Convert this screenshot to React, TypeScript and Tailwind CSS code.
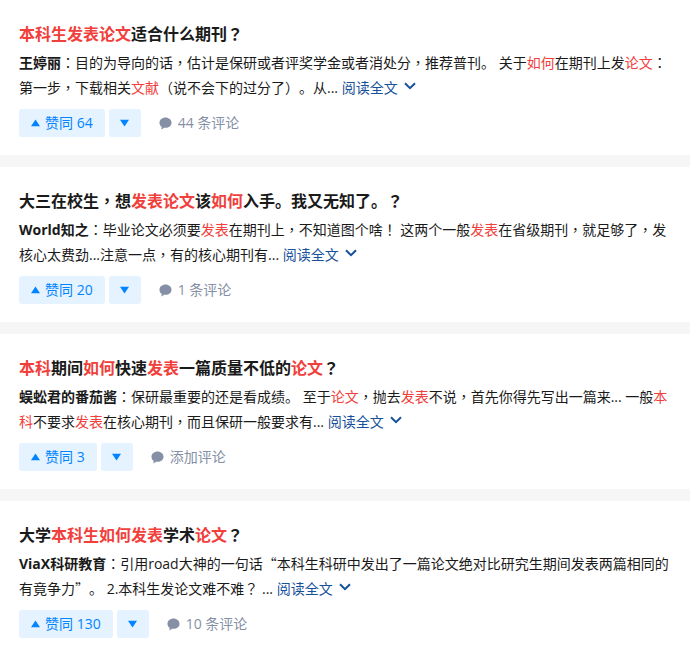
import React from 'react';

const fontStack = 'font-["Open_Sans","Noto_Sans_CJK_SC",sans-serif]';

// centred full-width punctuation and wide quotes, as the reference draws them
const Punct: React.FC<{ text: string }> = ({ text }) => (
  <>
    {text.split(/([，：？！（）“”])/).map((part, i) =>
      i % 2 === 0 ? (
        <React.Fragment key={i}>{part}</React.Fragment>
      ) : part === '“' || part === '”' ? (
        <span key={i} className='font-["Noto_Sans_CJK_SC",sans-serif]'>
          {part}
        </span>
      ) : (
        <span key={i} className='font-["Noto_Sans_CJK_TC",sans-serif]'>
          {part}
        </span>
      ),
    )}
  </>
);

// ~text~ marks a highlighted word
const Marked: React.FC<{ text: string }> = ({ text }) => (
  <>
    {text.split('~').map((part, i) =>
      i % 2 === 1 ? (
        <span key={i} className="text-[#f1403c]">
          {part}
        </span>
      ) : (
        <Punct key={i} text={part} />
      ),
    )}
  </>
);

const items = [
  {
    title: '~本科生发表论文~适合什么期刊？',
    author: '王婷丽',
    excerpt:
      '目的为导向的话，估计是保研或者评奖学金或者消处分，推荐普刊。 关于~如何~在期刊上发~论文~：第一步，下载相关~文献~（说不会下的过分了）。从...',
    votes: 64,
    comments: '44 条评论',
  },
  {
    title: '大三在校生，想~发表论文~该~如何~入手。我又无知了。？',
    author: 'World知之',
    excerpt:
      '毕业论文必须要~发表~在期刊上，不知道图个啥！ 这两个一般~发表~在省级期刊，就足够了，发核心太费劲...注意一点，有的核心期刊有...',
    votes: 20,
    comments: '1 条评论',
  },
  {
    title: '~本科~期间~如何~快速~发表~一篇质量不低的~论文~？',
    author: '蜈蚣君的番茄酱',
    excerpt:
      '保研最重要的还是看成绩。 至于~论文~，抛去~发表~不说，首先你得先写出一篇来... 一般~本科~不要求~发表~在核心期刊，而且保研一般要求有...',
    votes: 3,
    comments: '添加评论',
  },
  {
    title: '大学~本科生如何发表~学术~论文~？',
    author: 'ViaX科研教育',
    excerpt:
      '引用road大神的一句话“本科生科研中发出了一篇论文绝对比研究生期间发表两篇相同的有竟争力”。 2.本科生发论文难不难？ ...',
    votes: 130,
    comments: '10 条评论',
  },
];

const Triangle: React.FC<{ down?: boolean }> = ({ down }) => (
  <svg viewBox="0 0 10 8" className="w-[9px] h-[8px] fill-current">
    <path d={down ? 'M0 0.5h10L5 8z' : 'M5 0l5 7.5H0z'} />
  </svg>
);

const App: React.FC = () => {
  return (
    <div className={`w-[690px] h-[654px] overflow-hidden bg-[#f6f6f6] [text-spacing-trim:space-all] ${fontStack}`}>
      {items.map((item) => (
        <div key={item.author} className="bg-white h-[155px] mb-3 pt-[21px] pl-[19px] pr-[19px]">
          <h2 className="text-base font-bold leading-6 text-[#1a1a1a]">
            <Marked text={item.title} />
          </h2>
          <p className="mt-1 text-sm leading-[25px] text-[#1a1a1a]">
            <b className="font-bold">{item.author}</b>
            <Punct text="：" />
            <Marked text={item.excerpt} />{' '}
            <span className="text-[#175199]">
              阅读全文
              <svg viewBox="0 0 12 8" className="inline-block ml-[6px] w-3 h-2 align-[3px] fill-none stroke-current stroke-2">
                <path d="M1 1.2l5 5 5-5" />
              </svg>
            </span>
          </p>
          <div className="mt-[9px] flex items-center h-7 text-sm">
            <button className="h-7 px-3 flex items-center gap-[5px] rounded-[3px] bg-[#e5f2ff] text-[#0084ff]">
              <Triangle />
              赞同 {item.votes}
            </button>
            <button className="ml-1 w-8 h-7 flex items-center justify-center rounded-[3px] bg-[#e5f2ff] text-[#0084ff]">
              <Triangle down />
            </button>
            <span className="ml-[18px] flex items-center gap-[6px] text-[#8590a6]">
              <svg viewBox="0 0 14 14" className="w-[13px] h-[13px] fill-current">
                <path d="M7 0.5c3.6 0 6.500 2.500 6.500 5.600S10.600 11.700 7 11.700c-.6 0-1.200-.1-1.700-.2-.7.8-1.800 1.600-3 1.800.4-.7.7-1.700.7-2.600C1.500 9.700.5 8 .5 6.100.5 3 3.400.5 7 .5z" />
              </svg>
              {item.comments}
            </span>
          </div>
        </div>
      ))}
    </div>
  );
};

export default App;
